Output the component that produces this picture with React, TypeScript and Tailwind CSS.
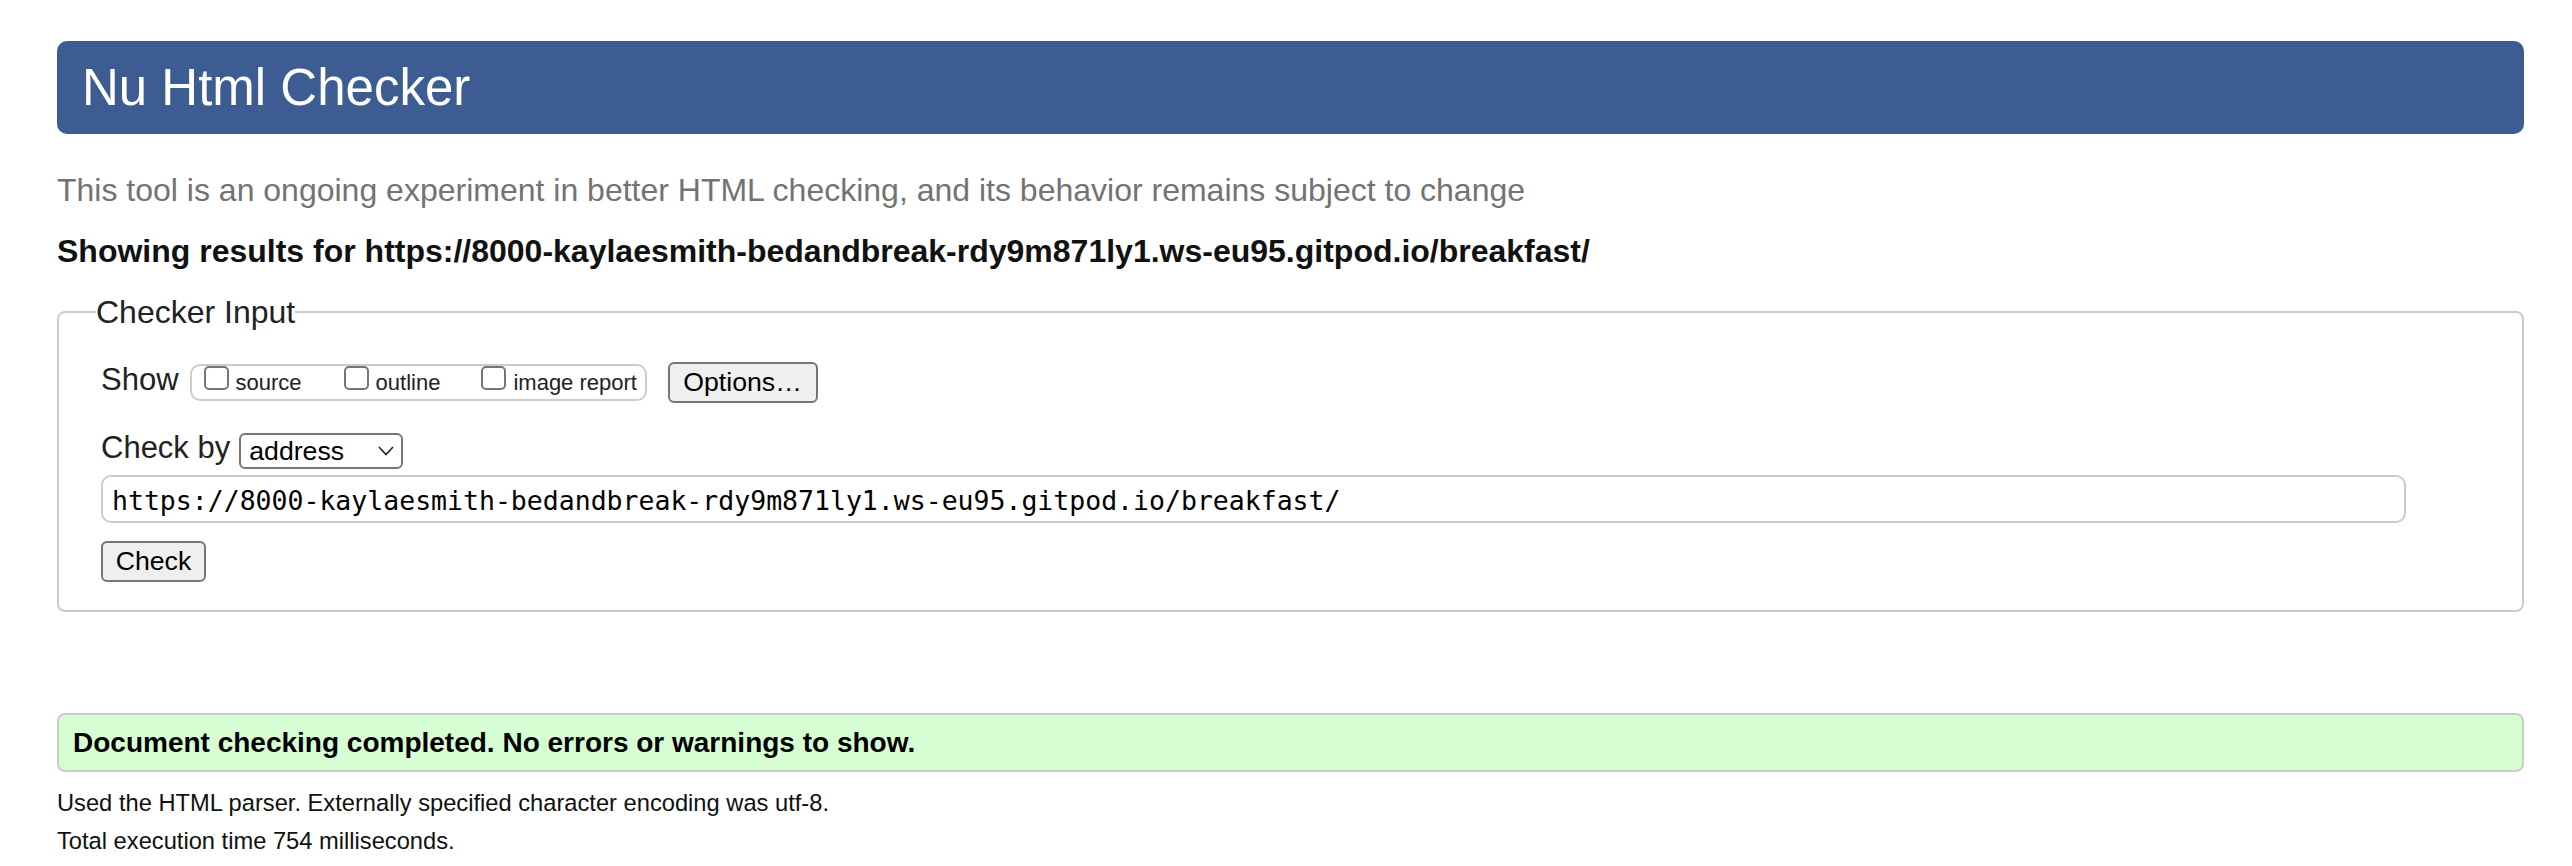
import React from "react";

function Cb({ className = "" }: { className?: string }) {
  return (
    <span
      className={
        "inline-block h-[24px] w-[25px] rounded-[5px] border-2 border-[#767676] bg-white align-baseline " +
        className
      }
    />
  );
}

export default function App() {
  return (
    <div className="min-h-[866px] bg-white pt-[41px] pl-[57px] pr-[48px] font-['Liberation_Sans',Arial,sans-serif] text-[#222]">
      <h1 className="h-[93px] rounded-[10px] bg-[#3d5c91] pl-[25px] text-[51px] font-normal leading-[93px] text-white">
        Nu Html Checker
      </h1>
      <p className="mt-[38px] text-[32px] leading-[36px] text-[#737373]">
        This tool is an ongoing experiment in better HTML checking, and its behavior remains subject to change
      </p>
      <p className="mt-[25px] text-[32px] font-bold leading-[36px] text-[#111]">
        Showing results for https://8000-kaylaesmith-bedandbreak-rdy9m871ly1.ws-eu95.gitpod.io/breakfast/
      </p>

      <fieldset className="mt-[25px] rounded-[8px] border-2 border-[#ccc] pt-[32px] pr-[116px] pb-[28px] pl-[42px]">
        <legend className="-ml-[5px] p-0 text-[32px] leading-[36px] text-[#222]">Checker Input</legend>

        <div className="flex h-[41px] items-center">
          <span className="mb-[6px] text-[31px] leading-[36px]">Show</span>
          <div className="ml-[11px] h-[37px] w-[457px] whitespace-nowrap rounded-[10px] border-2 border-[#ccc] pl-[12px] text-[22px] leading-[33px] text-[#222]">
            <Cb />
            <span className="ml-[7px]">source</span>
            <Cb className="ml-[42px]" />
            <span className="ml-[7px]">outline</span>
            <Cb className="ml-[41px]" />
            <span className="ml-[7px]">image report</span>
          </div>
          <button className="ml-[21px] flex h-[41px] w-[150px] items-center justify-center rounded-[6px] border-2 border-[#767676] bg-[#efefef] text-[26.67px] leading-none text-black">
            Options…
          </button>
        </div>

        <div className="mt-[30px] flex h-[36px] items-center">
          <span className="mb-[7px] text-[31px] leading-[36px]">Check by</span>
          <div className="ml-[9px] flex h-[36px] w-[164px] items-center justify-between rounded-[6px] border-2 border-[#767676] bg-white pr-[7px] pl-[8px] text-[26.67px] leading-none text-black">
            <span>address</span>
            <svg width="16" height="10" viewBox="0 0 16 10">
              <polyline points="1,1 8,8.5 15,1" fill="none" stroke="#222" strokeWidth="1.6" />
            </svg>
          </div>
        </div>

        <div className="mt-[6px] flex h-[48px] items-center whitespace-nowrap rounded-[10px] border-2 border-[#ccc] pt-[4px] pl-[9px] font-['DejaVu_Sans_Mono',monospace] text-[26.5px] leading-none text-black">
          https://8000-kaylaesmith-bedandbreak-rdy9m871ly1.ws-eu95.gitpod.io/breakfast/
        </div>

        <button className="mt-[18px] flex h-[41px] w-[105px] items-center justify-center rounded-[6px] border-2 border-[#767676] bg-[#efefef] text-[26.67px] leading-none text-black">
          Check
        </button>
      </fieldset>

      <div className="mt-[101px] h-[59px] rounded-[8px] border-2 border-[#ccc] bg-[#d7fdd2] pl-[14px] text-[28px] font-bold leading-[55px] text-black">
        Document checking completed. No errors or warnings to show.
      </div>
      <p className="mt-[17px] text-[23.7px] leading-[28px] text-[#111]">
        Used the HTML parser. Externally specified character encoding was utf-8.
      </p>
      <p className="mt-[10px] text-[23.7px] leading-[28px] text-[#111]">Total execution time 754 milliseconds.</p>
    </div>
  );
}
